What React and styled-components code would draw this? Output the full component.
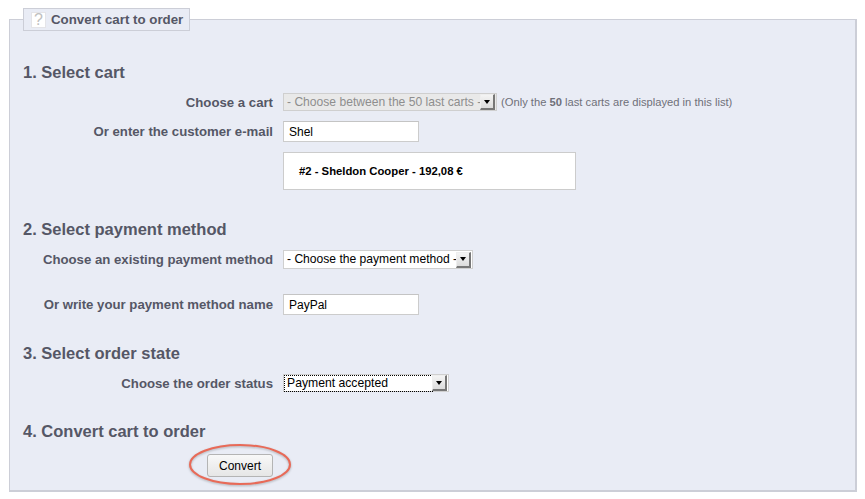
import React from 'react';
import styled, { createGlobalStyle } from 'styled-components';

const GlobalStyle = createGlobalStyle`
	html, body { margin: 0; padding: 0; background: #fff; }
	body { font-family: "Liberation Sans", Arial, sans-serif; }
`;

const Page = styled.div`
	width: 865px;
	height: 499px;
	box-sizing: border-box;
	padding: 8px 9px 0 9px;
	overflow: hidden;
`;

const Panel = styled.fieldset`
	box-sizing: border-box;
	width: 848px;
	height: 484px;
	margin: 0;
	padding: 0 0 0 13px;
	background: #e9ecf5;
	border: 2px solid #ccced7;
	border-width: 1px 2px 2px 1px;
`;

const Legend = styled.legend`
	display: flex;
	align-items: center;
	gap: 5px;
	box-sizing: border-box;
	width: 167px;
	height: 23px;
	margin-left: 0;
	padding: 0 0 0 7px;
	background: #e9ecf5;
	border: 1px solid #ccced7;
	color: #555766;
	font-size: 13.3px;
	font-weight: bold;
`;

const HelpIcon = styled.span`
	display: flex;
	align-items: center;
	justify-content: center;
	width: 15px;
	height: 16px;
	background: #fff;
	border: 1px solid #e4e4e8;
	box-sizing: border-box;
	color: #c0c0c0;
	font-size: 16px;
	font-weight: normal;
`;

const Heading = styled.h2`
	margin: ${(p) => p.$top}px 0 0 0;
	height: 20px;
	line-height: 20px;
	color: #555766;
	font-size: 16.5px;
	font-weight: bold;
`;

const Row = styled.div`
	display: flex;
	align-items: center;
	gap: 10px;
	margin-top: ${(p) => p.$top}px;
`;

const Label = styled.label`
	box-sizing: border-box;
	width: 250px;
	flex: none;
	text-align: right;
	color: #555766;
	font-size: 13.2px;
	font-weight: bold;
`;

const TextBox = styled.input`
	box-sizing: border-box;
	width: 136px;
	height: 21px;
	margin: 0;
	padding: 0 5px;
	background: #fff;
	border: 1px solid #cccccc;
	border-top-color: #c4c4c4;
	border-radius: 0;
	outline: none;
	color: #000;
	font-family: inherit;
	font-size: 12px;
`;

const SelectBox = styled.div`
	display: flex;
	align-items: center;
	justify-content: space-between;
	box-sizing: border-box;
	width: ${(p) => p.$width}px;
	height: ${(p) => p.$height}px;
	padding: 0 1px 0 ${(p) => (p.$focused ? 1 : 3)}px;
	background: ${(p) => (p.$disabled ? '#e9e9e9' : '#fff')};
	border: 1px solid #cfcfcf;
	color: ${(p) => (p.$disabled ? '#8e8e8e' : '#000')};
	font-size: 12.1px;
	white-space: nowrap;
`;

const SelectText = styled.span`
	flex: 1;
	min-width: 0;
	padding-left: ${(p) => (p.$focused ? 2 : 0)}px;
	line-height: 15px;
	font-size: ${(p) => (p.$focused ? 12.2 : 12.1)}px;
	outline: ${(p) => (p.$focused ? '1px dotted #000' : 'none')};
`;

const ArrowButton = styled.span`
	display: flex;
	flex: none;
	align-items: center;
	justify-content: center;
	box-sizing: border-box;
	width: 15px;
	height: 16px;
	background: linear-gradient(#f4f4f4, #dcdcdc);
	border-right: 2px solid #777;
	border-bottom: 2px solid #777;
	border-top: 1px solid #eee;
	border-left: 1px solid #eee;

	&::after {
		content: '';
		border-style: solid;
		border-width: 4px 3px 0 3px;
		border-color: #000 transparent transparent transparent;
	}
`;

const Hint = styled.span`
	margin-left: -6px;
	color: #6f7079;
	font-size: 11.2px;
`;

const ResultRow = styled.div`
	margin: 10px 0 0 260px;
`;

const ResultBox = styled.div`
	display: flex;
	align-items: center;
	box-sizing: border-box;
	width: 293px;
	height: 38px;
	padding-left: 15px;
	background: #fff;
	border: 1px solid #cccccc;
	color: #000;
	font-size: 11.3px;
	font-weight: bold;
`;

const ButtonRow = styled.div`
	margin: 13px 0 0 184px;
`;

const ButtonWrap = styled.div`
	position: relative;
	width: 66px;
	height: 23px;
`;

const Button = styled.button`
	box-sizing: border-box;
	width: 66px;
	height: 23px;
	margin: 0;
	padding: 0;
	background: linear-gradient(#f8f8f8, #e6e6e6);
	border: 1px solid #b4b4b4;
	border-radius: 3px;
	color: #000;
	font-family: inherit;
	font-size: 12px;
`;

const Highlight = styled.svg`
	position: absolute;
	top: -11px;
	left: -19px;
	pointer-events: none;
	filter: drop-shadow(0 1px 1px rgba(0, 0, 0, 0.25));
`;

function Select({ text, width, height, disabled, focused }) {
	return (
		<SelectBox $width={width} $height={height} $disabled={disabled} $focused={focused}>
			<SelectText $focused={focused}>{text}</SelectText>
			<ArrowButton />
		</SelectBox>
	);
}

export default function App() {
	return (
		<Page>
			<GlobalStyle />
			<Panel>
				<Legend>
					<HelpIcon>?</HelpIcon>
					Convert cart to order
				</Legend>

				<Heading $top={31}>1. Select cart</Heading>
				<Row $top={11}>
					<Label>Choose a cart</Label>
					<Select text="- Choose between the 50 last carts -" width={214} height={18} disabled />
					<Hint>(Only the <b>50</b> last carts are displayed in this list)</Hint>
				</Row>
				<Row $top={10}>
					<Label>Or enter the customer e-mail</Label>
					<TextBox defaultValue="Shel" />
				</Row>
				<ResultRow>
					<ResultBox>#2 - Sheldon Cooper - 192,08 €</ResultBox>
				</ResultRow>

				<Heading $top={29}>2. Select payment method</Heading>
				<Row $top={11}>
					<Label>Choose an existing payment method</Label>
					<Select text="- Choose the payment method -" width={190} height={19} />
				</Row>
				<Row $top={25}>
					<Label>Or write your payment method name</Label>
					<TextBox defaultValue="PayPal" />
				</Row>

				<Heading $top={28}>3. Select order state</Heading>
				<Row $top={11}>
					<Label>Choose the order status</Label>
					<Select text="Payment accepted" width={166} height={18} focused />
				</Row>

				<Heading $top={29}>4. Convert cart to order</Heading>
				<ButtonRow>
					<ButtonWrap>
						<Button>Convert</Button>
						<Highlight width="104" height="44" viewBox="0 0 104 44">
							<ellipse cx="52" cy="21.5" rx="50" ry="19.5" fill="none" stroke="#e86a58" strokeWidth="2" />
						</Highlight>
					</ButtonWrap>
				</ButtonRow>
			</Panel>
		</Page>
	);
}
